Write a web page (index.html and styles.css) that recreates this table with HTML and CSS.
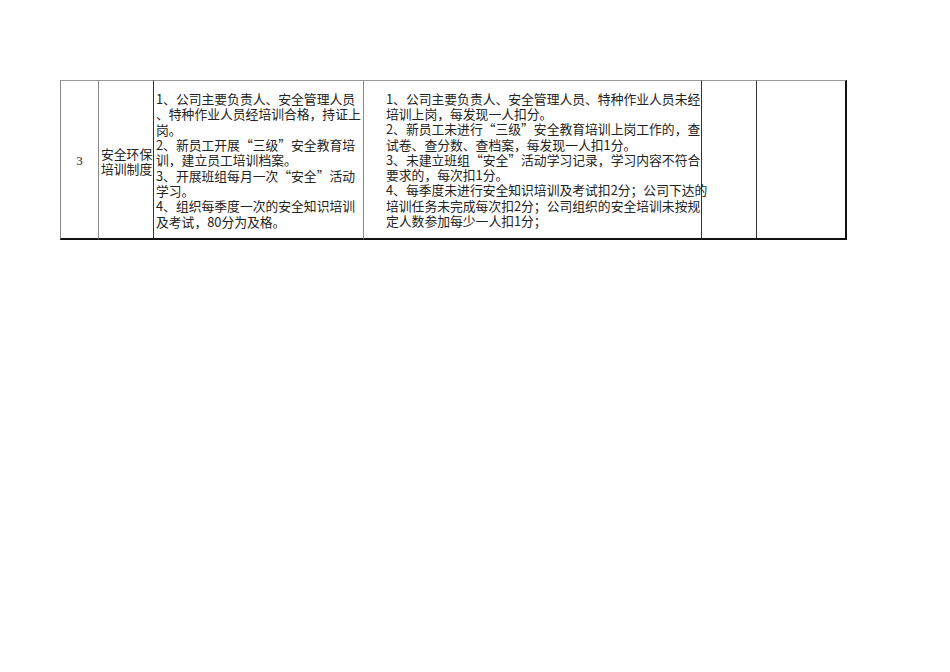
FILE: index.html
```html
<!DOCTYPE html>
<html lang="zh">
<head>
<meta charset="utf-8">
<link rel="stylesheet" href="styles.css">
</head>
<body>
<div class="page">
<table class="sheet">
<colgroup>
<col class="c1"><col class="c2"><col class="c3"><col class="c4"><col class="c5"><col class="c6">
</colgroup>
<tr>
<td class="num">3</td>
<td class="name">安全环保<br>培训制度</td>
<td class="req">1、公司主要负责人、安全管理人员<br>、特种作业人员经培训合格，持证上<br>岗。<br>2、新员工开展“三级”安全教育培<br>训，建立员工培训档案。<br>3、开展班组每月一次“安全”活动<br>学习。<br>4、组织每季度一次的安全知识培训<br>及考试，80分为及格。</td>
<td class="score">1、公司主要负责人、安全管理人员、特种作业人员未经<br>培训上岗，每发现一人扣分。<br>2、新员工未进行“三级”安全教育培训上岗工作的，查<br>试卷、查分数、查档案，每发现一人扣1分。<br>3、未建立班组“安全”活动学习记录，学习内容不符合<br>要求的，每次扣1分。<br>4、每季度未进行安全知识培训及考试扣2分；公司下达的<br>培训任务未完成每次扣2分；公司组织的安全培训未按规<br>定人数参加每少一人扣1分；</td>
<td class="blank dark"></td>
<td class="blank dark last"></td>
</tr>
</table>
</div>
</body>
</html>
```
FILE: styles.css
```css
html, body {
  margin: 0;
  padding: 0;
  background: #fff;
}
.page {
  padding: 80px 0 0 60px;
}
.sheet {
  border-collapse: separate;
  border-spacing: 0;
  table-layout: fixed;
  width: 787px;
  font-family: "Noto Sans CJK SC", "Noto Sans", sans-serif;
  font-size: 12.8px;
  line-height: 15.3px;
  color: #222;
}
.c1 { width: 38px; }
.c2 { width: 55px; }
.c3 { width: 210px; }
.c4 { width: 338px; }
.c5 { width: 55px; }
.c6 { width: 91px; }
.sheet td {
  box-sizing: border-box;
  height: 160px;
  padding: 0;
  vertical-align: middle;
  border-top: 1px solid #9a9a9a;
  border-bottom: 2px solid #111;
  border-left: 1px solid #8a8a8a;
  white-space: nowrap;
  overflow: visible;
}
.sheet td.num {
  text-align: center;
  font-family: "Liberation Serif", serif;
  font-size: 13px;
  padding-top: 2px;
}
.sheet td.name {
  padding-left: 2px;
  padding-top: 3px;
}
.sheet td.req {
  border-left-color: #333;
  padding-left: 2px;
  padding-top: 1px;
}
.sheet td.score {
  padding-left: 22px;
}
.sheet td.dark {
  border-left-color: #333;
}
.sheet td.last {
  border-right: 2px solid #111;
}
```
